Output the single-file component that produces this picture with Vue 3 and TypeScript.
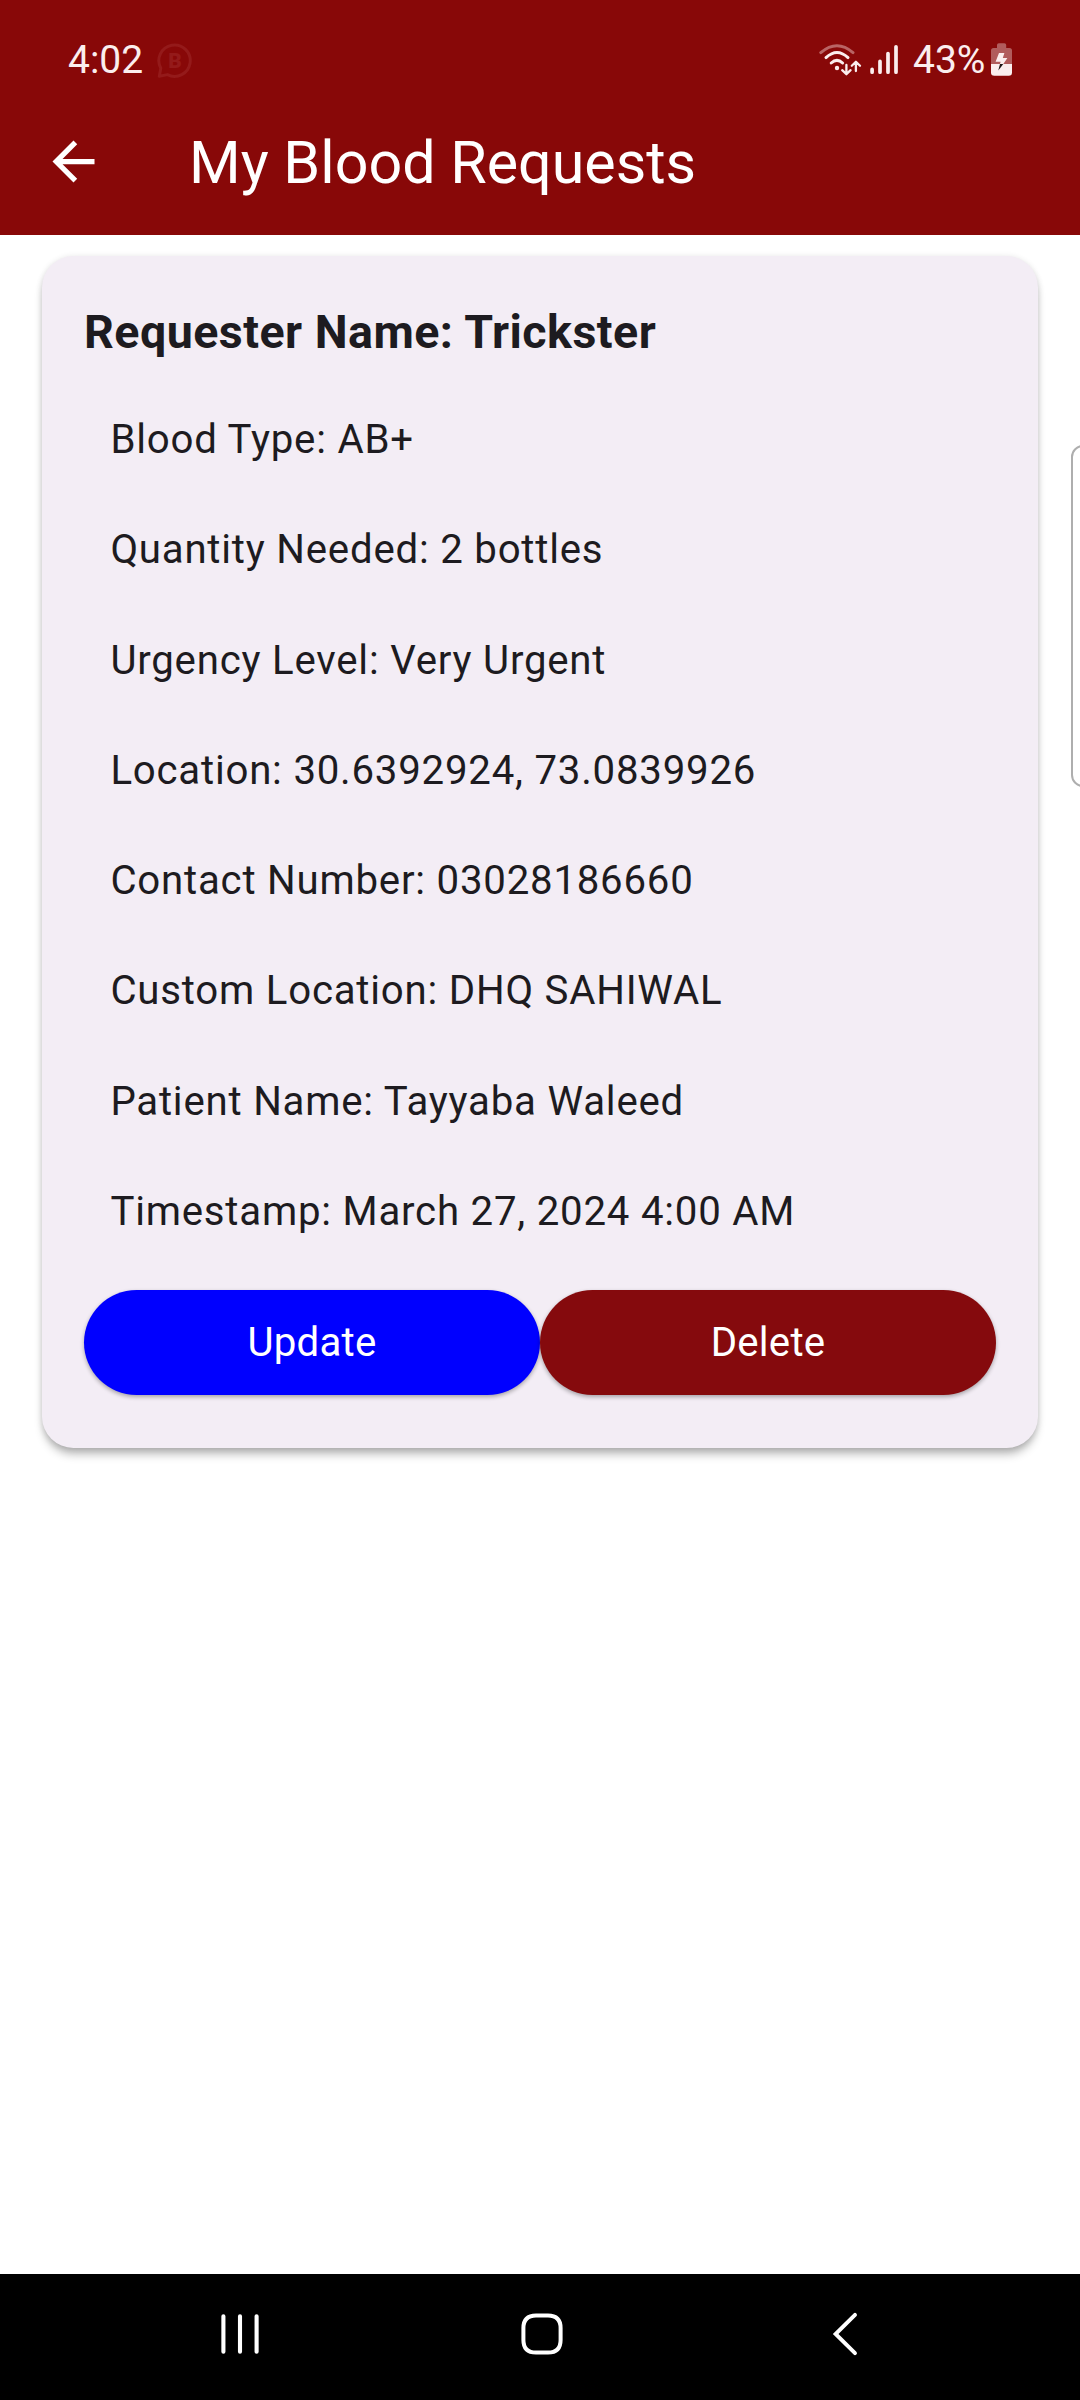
<script setup lang="ts">
interface Detail {
  label: string
  value: string
}

const details: Detail[] = [
  { label: 'Blood Type', value: 'AB+' },
  { label: 'Quantity Needed', value: '2 bottles' },
  { label: 'Urgency Level', value: 'Very Urgent' },
  { label: 'Location', value: '30.6392924, 73.0839926' },
  { label: 'Contact Number', value: '03028186660' },
  { label: 'Custom Location', value: 'DHQ SAHIWAL' },
  { label: 'Patient Name', value: 'Tayyaba Waleed' },
  { label: 'Timestamp', value: 'March 27, 2024 4:00 AM' },
]
</script>

<template>
  <div class="screen">
    <header class="top">
      <div class="status">
        <span class="time">4:02</span>
        <svg class="chat" width="38" height="38" viewBox="0 0 38 38">
          <path d="M3.3 34.2 L4.8 26.2 A15.7 15.7 0 1 1 11.4 32.6 Z" fill="none" stroke="#941a1a" stroke-width="3" stroke-linejoin="round" />
          <text x="19" y="26" text-anchor="middle" font-size="21" font-weight="900" fill="#941a1a">B</text>
        </svg>
        <span class="spacer"></span>
        <svg width="94" height="40" viewBox="819 40 94 40" fill="none" stroke="#fbeeee" stroke-linecap="round">
          <path d="M820.8 52.6 Q837 38.8 853 52.6" stroke="#b96464" stroke-width="3" />
          <path d="M826 57.6 Q837 47.4 848 57.6" stroke-width="3" />
          <path d="M831.2 63 Q837 57.6 842.6 63" stroke-width="3" />
          <circle cx="837" cy="68" r="2.2" fill="#fbeeee" stroke="none" />
          <path d="M846.4 65 V73.4 M842.2 70.2 L846.4 74.2 L850.6 70.2" stroke-width="2.3" stroke-linejoin="round" />
          <path d="M855.9 71 V62.4 M851.8 65.8 L855.9 61.8 L860 65.8" stroke-width="2.3" stroke-linejoin="round" />
          <path d="M872.1 69.4 V72.2 M880 61.4 V72.2 M888 53.6 V72.2 M896 46.8 V72.2" stroke-width="3.7" />
        </svg>
        <span class="percent">43%</span>
        <svg width="21" height="40" viewBox="991 40 21 40">
          <path d="M997 48 V45 Q997 43.2 998.8 43.2 H1004.4 Q1006.2 43.2 1006.2 45 V48 H1009.5 Q1012 48 1012 50.5 V64 H991 V50.5 Q991 48 993.5 48 Z" fill="#b15c5c" />
          <path d="M991 64 H1012 V72.4 Q1012 75.7 1008.7 75.7 H994.3 Q991 75.7 991 72.4 Z" fill="#fbeeee" />
          <path d="M999 53 H1004.4 L1002.8 58 H1007.4 L1003.3 64 H1000 L1000.6 61.8 H995.6 Z" fill="#fbeeee" />
          <path d="M1000 64 H1003.3 L998.3 70.6 Z" fill="#1b1414" />
        </svg>
      </div>
      <div class="appbar">
        <svg class="back" width="63" height="63" viewBox="0 0 24 24" fill="#fff">
          <path d="M20 11H7.83l5.59-5.59L12 4l-8 8 8 8 1.41-1.41L7.83 13H20v-2z" />
        </svg>
        <h1 class="title">My Blood Requests</h1>
      </div>
    </header>

    <main class="body">
      <section class="card">
        <h2 class="name">Requester Name: Trickster</h2>
        <ul class="details">
          <li v-for="d in details" :key="d.label" class="detail">{{ d.label }}: {{ d.value }}</li>
        </ul>
        <div class="actions">
          <button class="btn update" type="button">Update</button>
          <button class="btn delete" type="button">Delete</button>
        </div>
      </section>
      <div class="edge-panel"></div>
    </main>

    <nav class="navbar">
      <svg width="1080" height="126" viewBox="0 2274 1080 126" fill="none" stroke="#fff" stroke-linecap="round">
        <path d="M223.4 2316.2 V2351.8 M240 2316.2 V2351.8 M256.6 2316.2 V2351.8" stroke-width="4.1" />
        <path d="M536 2315.4 H548 Q560.6 2315.4 560.6 2328 V2340 Q560.6 2352.6 548 2352.6 H536 Q523.4 2352.6 523.4 2340 V2328 Q523.4 2315.4 536 2315.4 Z" stroke-width="4" />
        <path d="M855 2314.8 L835.6 2334 L855 2353.2" stroke-width="3.9" stroke-linejoin="miter" />
      </svg>
    </nav>
  </div>
</template>

<style>
body {
  margin: 0;
  background: #fff;
}
</style>

<style scoped>
.screen {
  position: relative;
  display: flex;
  flex-direction: column;
  width: 1080px;
  height: 2400px;
  overflow: hidden;
  background: #fff;
  font-family: Roboto, sans-serif;
  color: #1d1b20;
}
.top {
  height: 235px;
  flex: none;
  background: #880808;
  color: #fff;
}
.status {
  box-sizing: border-box;
  display: flex;
  align-items: center;
  height: 88px;
  padding: 32px 68px 0;
  font-size: 39px;
  line-height: 56px;
  color: #fbeeee;
}
.time {
  width: 88px;
  margin-top: -1px;
}
.chat {
  margin-top: 1px;
}
.spacer {
  flex: 1;
}
.percent {
  width: 78px;
  margin-top: -1px;
}
.appbar {
  display: flex;
  align-items: center;
  height: 147px;
  padding-left: 42px;
}
.back {
  flex: none;
}
.title {
  margin: 3px 0 0 84px;
  font-size: 59.2px;
  line-height: 76px;
  font-weight: 400;
  white-space: nowrap;
}
.body {
  flex: 1;
  padding: 21px 42px 0;
}
.card {
  box-sizing: border-box;
  height: 1192px;
  padding: 43px 42px 42px;
  border-radius: 31.5px;
  background: #f3edf5;
  box-shadow: 0 8px 10px -2px rgba(0, 0, 0, 0.28), 0 1px 6px rgba(0, 0, 0, 0.12);
}
.name {
  margin: 0 0 20px;
  font-size: 46.6px;
  line-height: 66px;
  font-weight: 700;
  letter-spacing: 0.46px;
  white-space: nowrap;
}
.details {
  margin: 0;
  padding: 0 0 0 26.4px;
  list-style: none;
}
.detail {
  height: 110.25px;
  font-size: 40.2px;
  line-height: 110.25px;
  letter-spacing: 0.78px;
  white-space: nowrap;
}
.actions {
  display: flex;
  margin-top: 23px;
}
.btn {
  flex: 1;
  height: 105px;
  padding: 0;
  border: 0;
  border-radius: 52.5px;
  font-family: inherit;
  font-size: 40.2px;
  letter-spacing: 0.25px;
  color: #fff;
  box-shadow: 0 2px 4px rgba(0, 0, 0, 0.32);
}
.update {
  background: #0000ff;
}
.delete {
  background: #850a0d;
}
.edge-panel {
  position: absolute;
  left: 1070.5px;
  top: 445px;
  box-sizing: border-box;
  width: 24px;
  height: 342px;
  border: 2px solid #aeaeae;
  border-radius: 12px;
}
.navbar {
  flex: none;
  height: 126px;
  background: #000;
}
.navbar svg {
  display: block;
}
</style>
